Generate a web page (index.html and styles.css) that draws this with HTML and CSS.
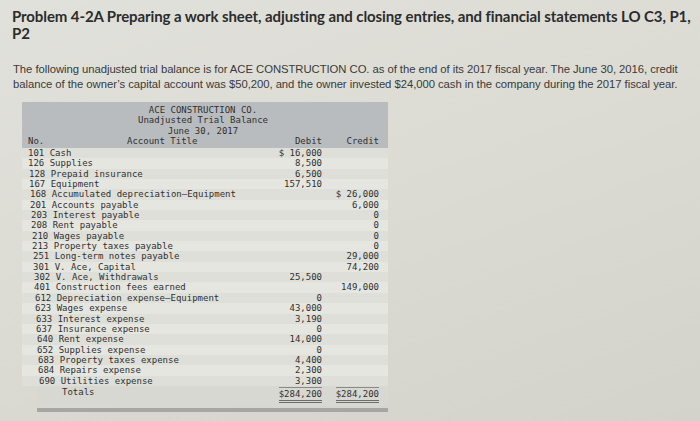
FILE: index.html
```html
<!DOCTYPE html>
<html>
<head>
<meta charset="utf-8">
<link rel="stylesheet" href="styles.css">
</head>
<body>
<div class="page">
  <h1 class="title">Problem 4-2A Preparing a work sheet, adjusting and closing entries, and financial statements LO C3, P1, P2</h1>
  <p class="intro">The following unadjusted trial balance is for ACE CONSTRUCTION CO. as of the end of its 2017 fiscal year. The June 30, 2016, credit balance of the owner’s capital account was $50,200, and the owner invested $24,000 cash in the company during the 2017 fiscal year.</p>
  <div class="tb">
    <div class="tb-head">
      <div class="tb-caption">ACE CONSTRUCTION CO.</div>
      <div class="tb-caption">Unadjusted Trial Balance</div>
      <div class="tb-caption">June 30, 2017</div>
      <div class="row head-row">
        <span class="acct"><span class="no">No.</span><span class="acct-title">Account Title</span></span>
        <span class="amt">Debit</span>
        <span class="amt">Credit</span>
      </div>
    </div>
    <div class="tb-body">
      <div class="row"><span class="acct">101 Cash</span><span class="amt">$ 16,000</span><span class="amt"></span></div>
      <div class="row"><span class="acct">126 Supplies</span><span class="amt">8,500</span><span class="amt"></span></div>
      <div class="row"><span class="acct">128 Prepaid insurance</span><span class="amt">6,500</span><span class="amt"></span></div>
      <div class="row"><span class="acct">167 Equipment</span><span class="amt">157,510</span><span class="amt"></span></div>
      <div class="row"><span class="acct">168 Accumulated depreciation—Equipment</span><span class="amt"></span><span class="amt">$ 26,000</span></div>
      <div class="row"><span class="acct">201 Accounts payable</span><span class="amt"></span><span class="amt">6,000</span></div>
      <div class="row"><span class="acct">203 Interest payable</span><span class="amt"></span><span class="amt">0</span></div>
      <div class="row"><span class="acct">208 Rent payable</span><span class="amt"></span><span class="amt">0</span></div>
      <div class="row"><span class="acct">210 Wages payable</span><span class="amt"></span><span class="amt">0</span></div>
      <div class="row"><span class="acct">213 Property taxes payable</span><span class="amt"></span><span class="amt">0</span></div>
      <div class="row"><span class="acct">251 Long-term notes payable</span><span class="amt"></span><span class="amt">29,000</span></div>
      <div class="row"><span class="acct">301 V. Ace, Capital</span><span class="amt"></span><span class="amt">74,200</span></div>
      <div class="row"><span class="acct">302 V. Ace, Withdrawals</span><span class="amt">25,500</span><span class="amt"></span></div>
      <div class="row"><span class="acct">401 Construction fees earned</span><span class="amt"></span><span class="amt">149,000</span></div>
      <div class="row"><span class="acct">612 Depreciation expense—Equipment</span><span class="amt">0</span><span class="amt"></span></div>
      <div class="row"><span class="acct">623 Wages expense</span><span class="amt">43,000</span><span class="amt"></span></div>
      <div class="row"><span class="acct">633 Interest expense</span><span class="amt">3,190</span><span class="amt"></span></div>
      <div class="row"><span class="acct">637 Insurance expense</span><span class="amt">0</span><span class="amt"></span></div>
      <div class="row"><span class="acct">640 Rent expense</span><span class="amt">14,000</span><span class="amt"></span></div>
      <div class="row"><span class="acct">652 Supplies expense</span><span class="amt">0</span><span class="amt"></span></div>
      <div class="row"><span class="acct">683 Property taxes expense</span><span class="amt">4,400</span><span class="amt"></span></div>
      <div class="row"><span class="acct">684 Repairs expense</span><span class="amt">2,300</span><span class="amt"></span></div>
      <div class="row"><span class="acct">690 Utilities expense</span><span class="amt">3,300</span><span class="amt"></span></div>
      <div class="row total-row"><span class="acct totals-label">Totals</span><span class="amt"><span class="total">$284,200</span></span><span class="amt"><span class="total">$284,200</span></span></div>
    </div>
    <div class="tb-foot"></div>
  </div>
</div>
</body>
</html>
```

FILE: styles.css
```css
html, body {
  margin: 0;
  padding: 0;
}
body {
  width: 700px;
  height: 421px;
  overflow: hidden;
  background: linear-gradient(160deg, #e1e1db 0%, #dcdcd5 45%, #d3d3cb 100%);
}
.page {
  padding: 8px 6px 0 12px;
}
.title {
  margin: 0;
  font-family: "Lato", "Liberation Sans", sans-serif;
  font-weight: 700;
  font-size: 15px;
  line-height: 17px;
  color: #2c2c2c;
  letter-spacing: -0.1px;
}
.intro {
  margin: 20px 0 0 1px;
  font-family: "Liberation Sans", Arial, sans-serif;
  font-size: 11.3px;
  line-height: 15px;
  color: #3a3a3a;
  letter-spacing: -0.05px;
}
.tb {
  margin: 10px 0 0 10px;
  width: 366px;
  font-family: "DejaVu Sans Mono", monospace;
  font-size: 9px;
  color: #303030;
}
.tb-head {
  background: #b9bcbe;
  padding-top: 3px;
  height: 43px;
}
.tb-caption {
  text-align: center;
  line-height: 10.3px;
  padding-right: 4px;
}
.row {
  display: grid;
  grid-template-columns: 1fr 50px 57px;
  line-height: 10.4px;
  padding: 0 9px 0 6px;
  white-space: pre;
}
.head-row .acct {
  display: flex;
}
.no {
  width: 99px;
}
.amt {
  text-align: right;
}
.tb-body .row {
  line-height: 10.35px;
  background: #dedfd9;
}
.tb-body .row:nth-child(even) {
  background: #e6e6e1;
}
.tb-body .row:nth-child(n+3) .acct { padding-left: 1px; }
.tb-body .row:nth-child(n+5) .acct { padding-left: 2px; }
.tb-body .row:nth-child(n+7) .acct { padding-left: 3px; }
.tb-body .row:nth-child(n+9) .acct { padding-left: 4px; }
.tb-body .row:nth-child(n+11) .acct { padding-left: 5px; }
.tb-body .row:nth-child(n+13) .acct { padding-left: 6px; }
.tb-body .row:nth-child(n+15) .acct { padding-left: 7px; }
.tb-body .row:nth-child(n+17) .acct { padding-left: 8px; }
.tb-body .row:nth-child(n+19) .acct { padding-left: 9px; }
.tb-body .row:nth-child(n+21) .acct { padding-left: 10px; }
.tb-body .row:nth-child(n+23) .acct { padding-left: 11px; }
.tb-body .row.total-row {
  background: #d8d8d2;
  padding-top: 1px;
  padding-bottom: 3px;
  margin-left: 15px;
  padding-left: 0;
}
.tb-body .row.total-row .totals-label {
  padding-left: 25px;
}
.total {
  display: inline-block;
  border-top: 1px solid #8a8a88;
  border-bottom: 3px double #6d6d6b;
  padding: 1px 0 1px 0;
}
.tb-foot {
  margin: 2px 0 0 15px;
  height: 4px;
  background: #a6a7a5;
}
```
